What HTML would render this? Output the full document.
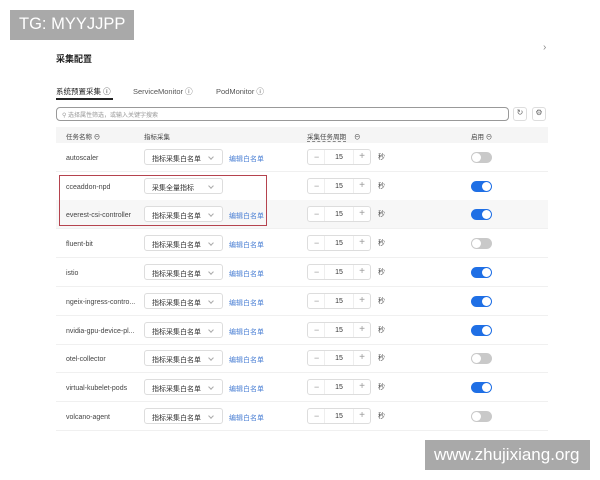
<!DOCTYPE html>
<html><head><meta charset="utf-8"><style>
*{box-sizing:border-box;margin:0;padding:0}
body{width:600px;height:480px;background:#fff;position:relative;overflow:hidden;font-family:"Liberation Sans","Noto Sans CJK SC",sans-serif;color:#333}
.a{position:absolute}
.t{font-size:7px;color:#444;white-space:nowrap}
.n{margin-top:2px}
.sel{position:absolute;left:144px;width:79px;height:16px;border:1px solid #ddd;border-radius:3px;font-size:7px;color:#333;padding:4px 0 0 7px}
.sel:after{content:"";position:absolute;right:9px;top:5px;width:3px;height:3px;border-right:1px solid #aaa;border-bottom:1px solid #aaa;transform:rotate(45deg)}
.lk{position:absolute;left:229px;font-size:7px;color:#4a7fd4;margin-top:1px}
.st{position:absolute;left:307px;width:64px;height:16px;border:1px solid #ddd;border-radius:3px;font-size:7px}
.st .m{position:absolute;left:6px;top:2px;color:#999;font-size:9px}
.st .p{position:absolute;right:5px;top:1px;color:#999;font-size:10px}
.st .v{position:absolute;left:0;right:0;text-align:center;top:4px;color:#333}
.st .d1{position:absolute;left:16px;top:0;bottom:0;border-left:1px solid #eee}
.st .d2{position:absolute;right:16px;top:0;bottom:0;border-left:1px solid #eee}
.sec{position:absolute;left:378px;font-size:7px;color:#555;margin-top:-1px}
.tg{position:absolute;left:471px;width:21px;height:11px;border-radius:6px;background:#c9c9c9}
.tg:after{content:"";position:absolute;left:1px;top:1px;width:9px;height:9px;border-radius:50%;background:#fff}
.tg.on{background:#1f6fe5}
.tg.on:after{left:11px}
.row{position:absolute;left:56px;width:492px;height:29px;border-bottom:1px solid #f0f0f0}
</style></head><body>
<div class="a" style="left:10px;top:10px;width:124px;height:30px;background:#a9a9a9;color:#fff;font-size:16.5px;padding:5px 0 0 9px">TG: MYYJJPP</div>
<div class="a" style="left:56px;top:52px;font-size:9px;font-weight:bold;color:#222">采集配置</div>
<div class="a" style="left:543px;top:42px;font-size:10px;color:#888">›</div>
<div class="a t" style="left:56px;top:86px;color:#222;font-size:7.5px">系统预置采集 ⓘ</div>
<div class="a" style="left:56px;top:98px;width:57px;height:1.5px;background:#222"></div>
<div class="a t" style="left:133px;top:86px;color:#555;font-size:7.5px">ServiceMonitor ⓘ</div>
<div class="a t" style="left:216px;top:86px;color:#555;font-size:7.5px">PodMonitor ⓘ</div>
<div class="a" style="left:56px;top:107px;width:453px;height:14px;border:1px solid #999;border-radius:4px;font-size:6px;color:#999;padding:2px 0 0 5px">⚲ 选择属性筛选，或输入关键字搜索</div>
<div class="a" style="left:513px;top:107px;width:14px;height:14px;border:1px solid #ddd;border-radius:3px;font-size:8px;text-align:center;color:#666">↻</div>
<div class="a" style="left:532px;top:107px;width:14px;height:14px;border:1px solid #ddd;border-radius:3px;font-size:8px;text-align:center;color:#666">⚙</div>
<div class="a" style="left:56px;top:127px;width:492px;height:16px;background:#f5f5f5"></div>
<div class="a t" style="left:66px;top:131px;font-size:6.5px">任务名称 ⊖</div>
<div class="a t" style="left:144px;top:131px;font-size:6.5px">指标采集</div>
<div class="a t" style="left:307px;top:131px;font-size:6.5px;border-bottom:1px dashed #888">采集任务周期</div>
<div class="a t" style="left:354px;top:131px;font-size:6.5px">⊖</div>
<div class="a t" style="left:471px;top:131px;font-size:6.5px">启用 ⊖</div>
<div class="row" style="top:143px"></div>
<div class="row" style="top:172px"></div>
<div class="row" style="top:200px;background:#f7f7f7"></div>
<div class="row" style="top:229px"></div>
<div class="row" style="top:258px"></div>
<div class="row" style="top:287px"></div>
<div class="row" style="top:316px"></div>
<div class="row" style="top:344px"></div>
<div class="row" style="top:373px"></div>
<div class="row" style="top:402px"></div>

<div class="a t n" style="left:66px;top:153px">autoscaler</div><div class="sel" style="top:149px">指标采集白名单</div><div class="lk" style="top:153px">编辑白名单</div><div class="st" style="top:149px"><span class="m">−</span><span class="d1"></span><span class="v">15</span><span class="d2"></span><span class="p">+</span></div><div class="sec" style="top:153px">秒</div><div class="tg" style="top:152px"></div>
<div class="a t n" style="left:66px;top:182px">cceaddon-npd</div><div class="sel" style="top:178px">采集全量指标</div><div class="st" style="top:178px"><span class="m">−</span><span class="d1"></span><span class="v">15</span><span class="d2"></span><span class="p">+</span></div><div class="sec" style="top:182px">秒</div><div class="tg on" style="top:181px"></div>
<div class="a t n" style="left:66px;top:210px">everest-csi-controller</div><div class="sel" style="top:206px;background:#fff">指标采集白名单</div><div class="lk" style="top:210px">编辑白名单</div><div class="st" style="top:206px;background:#fff"><span class="m">−</span><span class="d1"></span><span class="v">15</span><span class="d2"></span><span class="p">+</span></div><div class="sec" style="top:210px">秒</div><div class="tg on" style="top:209px"></div>
<div class="a t n" style="left:66px;top:239px">fluent-bit</div><div class="sel" style="top:235px">指标采集白名单</div><div class="lk" style="top:239px">编辑白名单</div><div class="st" style="top:235px"><span class="m">−</span><span class="d1"></span><span class="v">15</span><span class="d2"></span><span class="p">+</span></div><div class="sec" style="top:239px">秒</div><div class="tg" style="top:238px"></div>
<div class="a t n" style="left:66px;top:268px">istio</div><div class="sel" style="top:264px">指标采集白名单</div><div class="lk" style="top:268px">编辑白名单</div><div class="st" style="top:264px"><span class="m">−</span><span class="d1"></span><span class="v">15</span><span class="d2"></span><span class="p">+</span></div><div class="sec" style="top:268px">秒</div><div class="tg on" style="top:267px"></div>
<div class="a t n" style="left:66px;top:297px">ngeix-ingress-contro...</div><div class="sel" style="top:293px">指标采集白名单</div><div class="lk" style="top:297px">编辑白名单</div><div class="st" style="top:293px"><span class="m">−</span><span class="d1"></span><span class="v">15</span><span class="d2"></span><span class="p">+</span></div><div class="sec" style="top:297px">秒</div><div class="tg on" style="top:296px"></div>
<div class="a t n" style="left:66px;top:326px">nvidia-gpu-device-pl...</div><div class="sel" style="top:322px">指标采集白名单</div><div class="lk" style="top:326px">编辑白名单</div><div class="st" style="top:322px"><span class="m">−</span><span class="d1"></span><span class="v">15</span><span class="d2"></span><span class="p">+</span></div><div class="sec" style="top:326px">秒</div><div class="tg on" style="top:325px"></div>
<div class="a t n" style="left:66px;top:354px">otel-collector</div><div class="sel" style="top:350px">指标采集白名单</div><div class="lk" style="top:354px">编辑白名单</div><div class="st" style="top:350px"><span class="m">−</span><span class="d1"></span><span class="v">15</span><span class="d2"></span><span class="p">+</span></div><div class="sec" style="top:354px">秒</div><div class="tg" style="top:353px"></div>
<div class="a t n" style="left:66px;top:383px">virtual-kubelet-pods</div><div class="sel" style="top:379px">指标采集白名单</div><div class="lk" style="top:383px">编辑白名单</div><div class="st" style="top:379px"><span class="m">−</span><span class="d1"></span><span class="v">15</span><span class="d2"></span><span class="p">+</span></div><div class="sec" style="top:383px">秒</div><div class="tg on" style="top:382px"></div>
<div class="a t n" style="left:66px;top:412px">volcano-agent</div><div class="sel" style="top:408px">指标采集白名单</div><div class="lk" style="top:412px">编辑白名单</div><div class="st" style="top:408px"><span class="m">−</span><span class="d1"></span><span class="v">15</span><span class="d2"></span><span class="p">+</span></div><div class="sec" style="top:412px">秒</div><div class="tg" style="top:411px"></div>

<div class="a" style="left:59px;top:175px;width:208px;height:51px;border:1.5px solid #b5434e"></div>
<div class="a" style="left:425px;top:440px;width:165px;height:30px;background:#a9a9a9;color:#fff;font-size:17px;padding:5px 0 0 9px;white-space:nowrap">www.zhujixiang.org</div>
</body></html>
